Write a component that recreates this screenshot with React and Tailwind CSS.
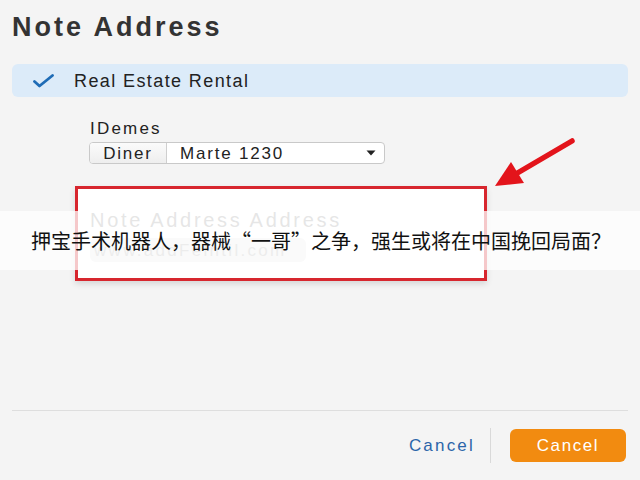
import React from "react";

export default function App() {
  return (
    <div
      className="relative w-[640px] h-[480px] overflow-hidden bg-[#f4f4f4] flex flex-col px-3 font-['Liberation_Sans',Arial,sans-serif]"
    >
      {/* Title */}
      <h1 className="mt-[12px] h-[30px] leading-[30px] text-[27px] font-bold tracking-[3px] text-[#333333]">
        Note Address
      </h1>

      {/* Selected row */}
      <div className="mt-[22px] h-[33px] rounded-md bg-[#dcebf9] flex items-center pl-[21px]">
        <svg width="22" height="14" viewBox="0 0 22 14" className="shrink-0">
          <path
            d="M1.5 7.5 L6.5 12 L19.5 1.5"
            fill="none"
            stroke="#1f6cb6"
            strokeWidth="2.8"
            strokeLinecap="round"
            strokeLinejoin="round"
          />
        </svg>
        <span className="ml-[19px] text-[18px] tracking-[1.4px] text-[#222222] leading-none">
          Real Estate Rental
        </span>
      </div>

      {/* Label + select */}
      <div className="mt-[22px] pl-[77px] flex flex-col">
        <div className="h-[20px] leading-[20px] text-[17px] tracking-[2.2px] text-[#222222] pl-[1px]">
          IDemes
        </div>
        <div className="mt-[3px] w-[296px] h-[22px] flex items-stretch rounded-[4px] border border-[#c9c9c9] bg-white overflow-hidden">
          <div className="w-[77px] shrink-0 flex items-center justify-center bg-gradient-to-b from-[#fbfbfb] to-[#eeeeee] border-r border-[#cfcfcf] text-[17px] tracking-[1.8px] text-[#222222] leading-none">
            Diner
          </div>
          <div className="flex-1 flex items-center justify-between pl-[13px] pr-[8px] text-[17px] tracking-[1.8px] text-[#222222] leading-none">
            <span>Marte 1230</span>
            <svg width="10" height="6" viewBox="0 0 10 6">
              <path d="M0.5 0.5 H9.5 L5 5.5 Z" fill="#222222" />
            </svg>
          </div>
        </div>
      </div>

      {/* Red highlighted box */}
      <div className="mt-[22px] ml-[63px] w-[412px] h-[95px] border-[3px] border-[#d7262e] bg-white shadow-[0_3px_6px_rgba(0,0,0,0.12)] pl-[12px] pt-[19px]">
        <div className="h-[24px] leading-[24px] text-[20px] tracking-[2.7px] text-[#9a9a9a]">
          Note Address Address
        </div>
        <div className="mt-[6px] w-[216px] h-[24px] rounded-md bg-[#e9e9e9] flex items-center pl-[4px] text-[17px] tracking-[2.3px] text-[#b5b5b5] leading-none">
          www.addFelntil.com
        </div>
      </div>

      {/* Footer */}
      <div className="mt-auto border-t border-[#dedede] pt-[17px] pb-[17px] flex items-center justify-end pr-[2px]">
        <button className="text-[17px] tracking-[2.2px] text-[#2b65a9] leading-none">
          Cancel
        </button>
        <div className="ml-[15px] mr-[19px] w-px h-[35px] bg-[#d9d9d9]" />
        <button className="w-[116px] h-[33px] rounded-[6px] bg-[#f28b10] text-white text-[17px] tracking-[1.6px] leading-none flex items-center justify-center">
          Cancel
        </button>
      </div>

      {/* Red arrow annotation */}
      <svg
        className="absolute left-0 top-0 pointer-events-none"
        width="640"
        height="480"
        viewBox="0 0 640 480"
      >
        <line x1="572" y1="141" x2="514" y2="175" stroke="#e3141b" strokeWidth="5.5" strokeLinecap="round" />
        <polygon points="495,186 511,162 524,183" fill="#e3141b" />
      </svg>

      {/* Caption banner overlay */}
      <div className="absolute left-0 right-0 top-[211px] h-[59px] bg-white/75 flex items-center justify-center pl-[2px]">
        <span className="text-[20px] text-[#111111] leading-none font-['Noto_Sans_CJK_SC','Noto_Sans_CJK_TC',sans-serif]" lang="zh-CN">
          押宝手术机器人，器械“一哥”之争，强生或将在中国挽回局面？
        </span>
      </div>
    </div>
  );
}
